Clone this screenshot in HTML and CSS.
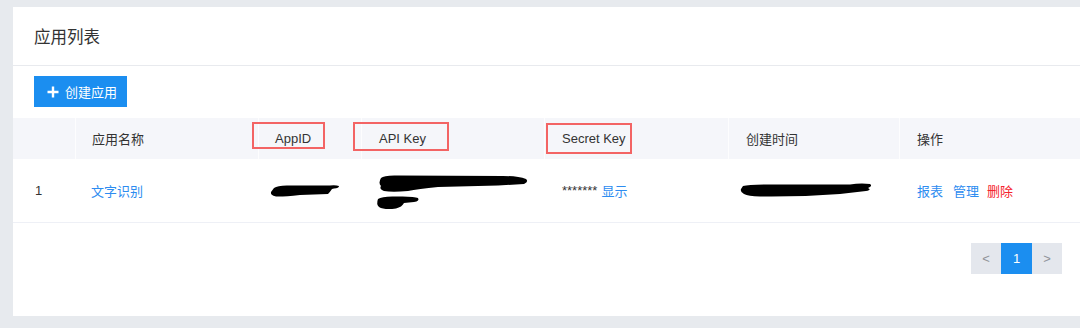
FILE: index.html
```html
<!DOCTYPE html>
<html lang="zh-CN">
<head>
<meta charset="utf-8">
<link rel="stylesheet" href="styles.css">
</head>
<body>
<div class="page">
  <div class="card">
    <div class="card-head">应用列表</div>
    <div class="toolbar">
      <button class="btn-primary">
        <svg class="plus" width="12" height="12" viewBox="0 0 12 12"><path d="M6 0.5V11.5M0.5 6H11.5" stroke="#fff" stroke-width="2.4"/></svg>
        <span>创建应用</span>
      </button>
    </div>
    <div class="table">
      <div class="thead">
        <div class="th c-idx"></div>
        <div class="th">应用名称</div>
        <div class="th mark-cell">AppID<span class="mark m-appid"></span></div>
        <div class="th mark-cell">API Key<span class="mark m-apikey"></span></div>
        <div class="th mark-cell">Secret Key<span class="mark m-secret"></span></div>
        <div class="th">创建时间</div>
        <div class="th">操作</div>
      </div>
      <div class="trow">
        <div class="td c-idx">1</div>
        <div class="td"><a class="link">文字识别</a></div>
        <div class="td td-blob">
          <svg width="70" height="14" viewBox="0 0 70 14"><path d="M4 4 Q8 1 20 1.5 L60 1.5 Q66 1 69 2 Q69 4 64 4.5 L62 5 Q60 8 58 10 L30 11 Q12 13 6 12.5 Q0 11 1 8 Z" fill="#000"/></svg>
        </div>
        <div class="td td-blob2">
          <div class="blobs">
            <svg width="150" height="18" viewBox="0 0 150 18"><path d="M3 3 Q6 0 20 0.5 L125 1 Q140 1 148 4 Q151 7 146 9 L120 10.5 L60 12 Q40 14 30 16 Q14 17.5 6 16 Q1 14 3 11 Q0 8 3 3 Z" fill="#000"/></svg>
            <svg width="44" height="14" viewBox="0 0 44 14"><path d="M2 3 Q6 0 20 0.5 Q38 0 42 2 Q44 5 38 6 L28 7 Q26 11 20 12.5 Q8 14 3 11 Q0 8 2 3 Z" fill="#000"/></svg>
          </div>
        </div>
        <div class="td td-secret"><span>*******</span><a class="link secret-show">显示</a></div>
        <div class="td td-blob">
          <svg width="133" height="15" viewBox="0 0 133 15"><path d="M3 3 Q10 1 40 1.5 L110 1.5 Q120 0 130 1 Q133 3 128 5 Q132 7 126 8 L100 11 Q60 14 20 13.5 Q8 13 4 11 Q0 9 1 6 Z" fill="#000"/></svg>
        </div>
        <div class="td actions">
          <a class="link">报表</a><a class="link">管理</a><a class="link danger">删除</a>
        </div>
      </div>
    </div>
    <div class="pager">
      <span class="pg pg-nav">&lt;</span>
      <span class="pg pg-active">1</span>
      <span class="pg pg-nav">&gt;</span>
    </div>
  </div>
</div>
</body>
</html>
```

FILE: styles.css
```css
* { box-sizing: border-box; }
html, body {
  margin: 0;
  padding: 0;
  background: #e7eaee;
  font-family: "Liberation Sans", "Noto Sans CJK SC", sans-serif;
  color: #333;
}
.page {
  width: 1080px;
  height: 328px;
  overflow: hidden;
  padding: 7px 0 0 13px;
}
.card {
  background: #fff;
  width: 1080px;
  height: 309px;
}
.card-head {
  height: 59px;
  border-bottom: 1px solid #e8eaee;
  padding: 0 0 1px 21px;
  display: flex;
  align-items: center;
  font-size: 16.5px;
  color: #333;
}
.toolbar {
  padding: 10px 0 11px 21px;
  display: flex;
}
.btn-primary {
  width: 93px;
  height: 31px;
  border: none;
  background: #1b8ef0;
  color: #fff;
  font-family: inherit;
  font-size: 13px;
  display: flex;
  align-items: center;
  padding: 0 0 0 13px;
  gap: 6px;
  cursor: pointer;
}
.table { width: 1067px; }
.thead, .trow {
  display: grid;
  grid-template-columns: 62px 183px 103px 183px 184px 171px 1fr;
}
.thead {
  height: 41px;
  background: #f5f6fa;
}
.th {
  display: flex;
  align-items: center;
  padding-left: 16px;
  font-size: 13px;
  color: #333;
  border-left: 1px solid #fdfdfe;
  position: relative;
}
.th:first-child { border-left: none; }
.th:nth-child(4), .th:nth-child(5), .th:nth-child(6), .th:nth-child(7) { padding-left: 17px; }
.mark {
  position: absolute;
  border: 2px solid #f36464;
}
.m-appid { left: -7px; top: 4px; width: 73px; height: 27px; }
.m-apikey { left: -9px; top: 4px; width: 96px; height: 29px; }
.m-secret { left: 1px; top: 5px; width: 86px; height: 31px; }
.trow {
  height: 64px;
  border-bottom: 1px solid #eef0f6;
}
.td {
  display: flex;
  align-items: center;
  padding-left: 16px;
  padding-bottom: 1px;
  font-size: 13px;
  color: #333;
}
.td.c-idx { padding-left: 22px; }
.td-secret { padding-left: 18px; gap: 4px; }
.td-blob { padding-left: 12px; padding-top: 1px; }
.td-blob2 { padding-left: 15px; }
.blobs {
  display: flex;
  flex-direction: column;
  gap: 3px;
  padding-top: 4px;
}
.blobs svg:first-child { margin-left: 2px; }
.link {
  color: #2d8cf0;
  text-decoration: none;
  cursor: pointer;
}
.actions { padding-left: 18px; }
.actions .link { margin-right: 10px; }
.actions .link:nth-child(2) { margin-right: 8px; }
.link.danger { color: #f5222d; }
.pager {
  display: flex;
  justify-content: flex-end;
  padding: 20px 18px 0 0;
  width: 1067px;
}
.pg {
  width: 30px;
  height: 31px;
  display: flex;
  align-items: center;
  justify-content: center;
  font-size: 13px;
}
.pg-nav {
  background: #e4e7ed;
  color: #909399;
}
.pg-active {
  width: 31px;
  background: #1b8ef0;
  color: #fff;
}
```
